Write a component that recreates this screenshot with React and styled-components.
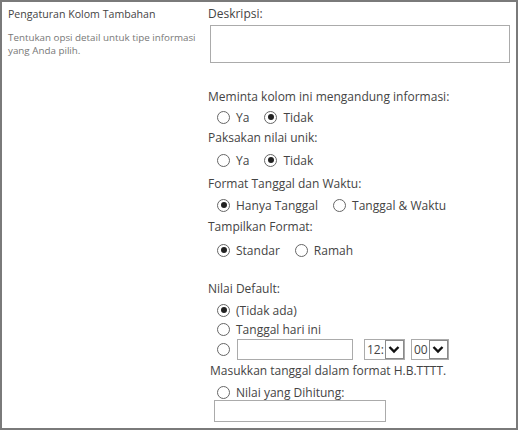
import React from 'react';
import styled, { createGlobalStyle } from 'styled-components';

const GlobalStyle = createGlobalStyle`
    body {
        margin: 0;
        background: #fff;
        font-family: 'Open Sans', 'Liberation Sans', sans-serif;
    }
`;

const Frame = styled.div`
    width: 514px;
    height: 426px;
    border: 2px solid #7a7a7a;
    display: flex;
    background: #fff;
    overflow: hidden;
`;

const Side = styled.div`
    width: 194px;
    padding: 2px 0 0 6px;
    flex-shrink: 0;
`;

const SideTitle = styled.div`
    font-size: 10.6px;
    color: #444;
    line-height: 20px;
`;

const SideText = styled.div`
    margin-top: 7px;
    font-size: 9.8px;
    line-height: 13px;
    color: #777;
    width: 192px;
`;

const Main = styled.div`
    flex: 1;
    padding-left: 6px;
    display: flex;
    flex-direction: column;
    align-items: flex-start;
`;

const Label = styled.div`
    font-size: 12px;
    line-height: 20px;
    color: #444;
    margin-top: ${p => p.$mt || 0}px;
    padding-left: ${p => p.$indent || 0}px;
    white-space: nowrap;
`;

const TextArea = styled.div`
    margin: 1px 0 0 2px;
    width: 298px;
    height: 36px;
    border: 1px solid #ababab;
`;

const OptionRow = styled.div`
    display: flex;
    align-items: center;
    gap: ${p => p.$gap ?? 15}px;
    height: ${p => p.$h || 20}px;
    margin-top: ${p => p.$mt || 0}px;
    padding-left: 9px;
`;

const Option = styled.label`
    display: flex;
    align-items: center;
    gap: 6px;
    font-size: 12px;
    color: #444;
    white-space: nowrap;
`;

const Radio = styled.span`
    width: 11px;
    height: 11px;
    border: 1px solid #666;
    border-radius: 50%;
    display: inline-flex;
    align-items: center;
    justify-content: center;
    flex-shrink: 0;

    &::after {
        content: '';
        width: 6px;
        height: 6px;
        border-radius: 50%;
        background: ${p => (p.$checked ? '#222' : 'transparent')};
    }
`;

const Input = styled.div`
    width: ${p => p.$w}px;
    height: ${p => p.$h || 19}px;
    border: 1px solid #ababab;
    background: #fff;
    margin-left: ${p => p.$ml || 0}px;
    margin-top: ${p => p.$mt || 0}px;
`;

const Select = styled.div`
    display: flex;
    align-items: center;
    height: 19px;
    border: 1px solid #ababab;
    margin-left: ${p => p.$ml}px;
    padding-left: 2px;
    font-size: 12px;
    color: #444;
`;

const Arrow = styled.span`
    width: 17px;
    height: 17px;
    margin-left: 1px;
    border: 1px solid #8a8a8a;
    display: flex;
    align-items: center;
    justify-content: center;
    background: #fff;
`;

const Chevron = () => (
    <svg width="12" height="9" viewBox="0 0 12 9">
        <path d="M1.5 2 L6 6.5 L10.5 2" fill="none" stroke="#111" strokeWidth="2.4" />
    </svg>
);

const Choice = ({ checked, children }) => (
    <Option>
        <Radio $checked={checked} />
        {children}
    </Option>
);

const App = () => (
    <>
        <GlobalStyle />
        <Frame>
            <Side>
                <SideTitle>Pengaturan Kolom Tambahan</SideTitle>
                <SideText>Tentukan opsi detail untuk tipe informasi yang Anda pilih.</SideText>
            </Side>
            <Main>
                <Label $mt={2}>Deskripsi:</Label>
                <TextArea />

                <Label $mt={24}>Meminta kolom ini mengandung informasi:</Label>
                <OptionRow>
                    <Choice>Ya</Choice>
                    <Choice checked>Tidak</Choice>
                </OptionRow>

                <Label $mt={1}>Paksakan nilai unik:</Label>
                <OptionRow $mt={2}>
                    <Choice>Ya</Choice>
                    <Choice checked>Tidak</Choice>
                </OptionRow>

                <Label $mt={4}>Format Tanggal dan Waktu:</Label>
                <OptionRow $mt={1}>
                    <Choice checked>Hanya Tanggal</Choice>
                    <Choice>Tanggal &amp; Waktu</Choice>
                </OptionRow>

                <Label $mt={2}>Tampilkan Format:</Label>
                <OptionRow $mt={3}>
                    <Choice checked>Standar</Choice>
                    <Choice>Ramah</Choice>
                </OptionRow>

                <Label $mt={19}>Nilai Default:</Label>
                <OptionRow $mt={1}>
                    <Choice checked>(Tidak ada)</Choice>
                </OptionRow>
                <OptionRow $mt={-1}>
                    <Choice>Tanggal hari ini</Choice>
                </OptionRow>
                <OptionRow $gap={0} $h={21}>
                    <Radio />
                    <Input $w={114} $ml={7} />
                    <Select $ml={11}>
                        12:
                        <Arrow><Chevron /></Arrow>
                    </Select>
                    <Select $ml={6}>
                        00
                        <Arrow><Chevron /></Arrow>
                    </Select>
                </OptionRow>
                <Label $mt={1} $indent={2}>Masukkan tanggal dalam format H.B.TTTT.</Label>
                <OptionRow $mt={1}>
                    <Choice>Nilai yang Dihitung:</Choice>
                </OptionRow>
                <Input $w={170} $h={20} $ml={6} $mt={-2} />
            </Main>
        </Frame>
    </>
);

export default App;
